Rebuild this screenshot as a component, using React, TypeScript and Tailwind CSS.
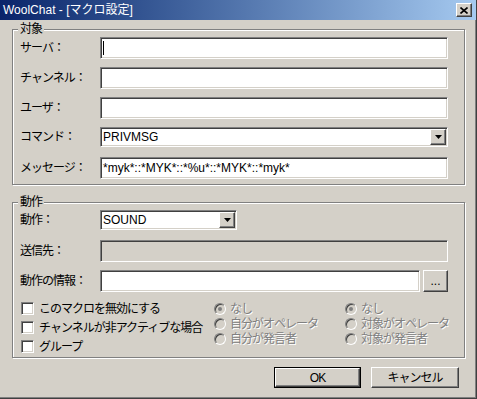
import React from 'react';

// Classic Win2000-style "macro settings" dialog

const sunken = "border border-t-[#808080] border-l-[#808080] border-b-white border-r-white shadow-[inset_1px_1px_0_#404040,inset_-1px_-1px_0_#d4d0c8]";
const raised = "border border-t-white border-l-white border-b-[#404040] border-r-[#404040] shadow-[inset_-1px_-1px_0_#808080]";
const disabledText = "text-[#808080] [text-shadow:1px_1px_0_#fff]";

const Arrow = () => (
  <svg width="7" height="4" viewBox="0 0 7 4">
    <path d="M0 0h7L3.5 4z" fill="#000" />
  </svg>
);

const Edit = ({ w, value, disabled, caret }: { w: number; value?: string; disabled?: boolean; caret?: boolean }) => (
  <div
    className={`${sunken} h-[22px] flex items-center pl-[2px] ${disabled ? 'bg-[#d4d0c8]' : 'bg-white'}`}
    style={{ width: w }}
  >
    {caret && <span className="w-px h-[14px] bg-black" />}
    {value && <span className="text-black leading-none">{value}</span>}
  </div>
);

const Combo = ({ w, value }: { w: number; value: string }) => (
  <div className={`${sunken} h-[20px] bg-white flex items-center`} style={{ width: w }}>
    <span className="flex-1 pl-[2px] leading-none">{value}</span>
    <div className={`${raised} w-[16px] h-[16px] mr-[1px] bg-[#d4d0c8] flex items-center justify-center`}>
      <Arrow />
    </div>
  </div>
);

const Row = ({ label, children, className = '' }: { label: string; children: React.ReactNode; className?: string }) => (
  <div className={`flex items-center ${className}`}>
    <span className="w-[80px] pl-[7px] box-content shrink-0 tracking-[-1px] whitespace-nowrap">{label}</span>
    {children}
  </div>
);

const Group = ({ title, children, className = '' }: { title: string; children: React.ReactNode; className?: string }) => (
  <div className={`relative ml-[12px] w-[453px] h-[156px] border border-[#808080] shadow-[inset_1px_1px_0_#fff,1px_1px_0_#fff] ${className}`}>
    <span className="absolute -top-[8px] left-[5px] px-[2px] bg-[#d4d0c8] leading-[14px] tracking-[-1px]">{title}</span>
    {children}
  </div>
);

const Check = ({ label, className = '' }: { label: string; className?: string }) => (
  <div className={`flex items-center h-[13px] ${className}`}>
    <span className={`${sunken} w-[13px] h-[13px] bg-white shrink-0`} />
    <span className="ml-[5px] leading-none tracking-[-1px] whitespace-nowrap">{label}</span>
  </div>
);

const Radio = ({ label, on }: { label: string; on?: boolean }) => (
  <div className="flex items-center h-[15px]">
    <span className="w-[12px] h-[12px] rounded-full border border-t-[#808080] border-l-[#808080] border-b-white border-r-white bg-[#d4d0c8] flex items-center justify-center shadow-[inset_1px_1px_0_#404040]">
      {on && <span className="w-[4px] h-[4px] rounded-full bg-[#808080]" />}
    </span>
    <span className={`ml-[4px] leading-none tracking-[-1px] whitespace-nowrap ${disabledText}`}>{label}</span>
  </div>
);

const Button = ({ label, isDefault, w }: { label: string; isDefault?: boolean; w: number }) => (
  <div className={`${isDefault ? 'border border-black' : ''} h-[21px]`} style={{ width: w }}>
    <div className={`${raised} h-full flex items-center justify-center bg-[#d4d0c8] tracking-[-1px]`}>{label}</div>
  </div>
);

export default function App() {
  return (
    <div className="w-[477px] h-[399px] bg-[#d4d0c8] overflow-hidden border-r border-b border-[#404040] shadow-[inset_-1px_-1px_0_#808080] text-[12px] text-black font-['Liberation_Sans','Noto_Sans_CJK_JP',sans-serif]">
      <div className="h-[20px] flex items-center justify-between bg-gradient-to-r from-[#0a246a] to-[#a6caf0]">
        <span className="pl-[3px] text-white">WoolChat - [マクロ設定]</span>
        <div className={`${raised} w-[16px] h-[14px] mr-[4px] bg-[#d4d0c8] flex items-center justify-center`}>
          <svg width="8" height="7" viewBox="0 0 8 7">
            <path d="M0.5 0.5l7 6M7.5 0.5l-7 6" stroke="#000" strokeWidth="1.6" />
          </svg>
        </div>
      </div>

      <Group title="対象" className="mt-[9px]">
        <div className="pt-[7px]">
          <Row label="サーバ："><Edit w={348} caret /></Row>
          <Row label="チャンネル：" className="mt-[8px]"><Edit w={348} /></Row>
          <Row label="ユーザ：" className="mt-[8px]"><Edit w={348} /></Row>
          <Row label="コマンド：" className="mt-[8px]"><Combo w={348} value="PRIVMSG" /></Row>
          <Row label="メッセージ：" className="mt-[10px]"><Edit w={348} value="*myk*::*MYK*::*%u*::*MYK*::*myk*" /></Row>
        </div>
      </Group>

      <Group title="動作" className="mt-[17px]">
        <div className="pt-[7px]">
          <Row label="動作："><Combo w={137} value="SOUND" /></Row>
          <Row label="送信先：" className="mt-[10px]"><Edit w={348} disabled /></Row>
          <Row label="動作の情報：" className="mt-[8px]">
            <Edit w={320} />
            <div className={`${raised} ml-[3px] w-[25px] h-[22px] bg-[#d4d0c8] flex items-center justify-center leading-none`}>...</div>
          </Row>
          <div className="flex mt-[9px]">
            <div className="pl-[8px] w-[201px]">
              <Check label="このマクロを無効にする" className="mt-[1px]" />
              <Check label="チャンネルが非アクティブな場合" className="mt-[6px]" />
              <Check label="グループ" className="mt-[6px]" />
            </div>
            <div className="w-[131px]">
              <Radio label="なし" on />
              <Radio label="自分がオペレータ" />
              <Radio label="自分が発言者" />
            </div>
            <div>
              <Radio label="なし" on />
              <Radio label="対象がオペレータ" />
              <Radio label="対象が発言者" />
            </div>
          </div>
        </div>
      </Group>

      <div className="flex mt-[9px] ml-[274px] gap-[10px]">
        <Button label="OK" isDefault w={87} />
        <Button label="キャンセル" w={88} />
      </div>
    </div>
  );
}
